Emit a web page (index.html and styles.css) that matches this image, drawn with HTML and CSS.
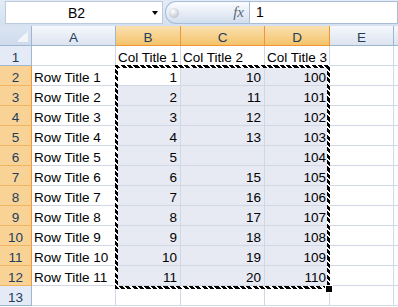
FILE: index.html
```html
<!DOCTYPE html>
<html lang="en">
<head>
    <meta charset="UTF-8">
    <title>Sheet selection</title>
    <link rel="stylesheet" href="styles.css">
</head>
<body>
    <div class="formula-bar">
        <div class="name-box">
            <span class="name">B2</span>
            <span class="drop"><span class="arrow"></span></span>
        </div>
        <div class="fx-box">
            <span class="knob"></span>
            <span class="fx">fx</span>
        </div>
        <div class="formula-input">1</div>
    </div>

    <div class="sheet">
        <div class="grid">
            <div class="c corner"></div>
            <div class="c h">A</div>
            <div class="c h hs">B</div>
            <div class="c h hs">C</div>
            <div class="c h hs">D</div>
            <div class="c h">E</div>
            <div class="c h"></div>

            <div class="c h rh">1</div>
            <div class="c"></div>
            <div class="c">Col Title 1</div>
            <div class="c">Col Title 2</div>
            <div class="c">Col Title 3</div>
            <div class="c"></div>
            <div class="c"></div>

            <div class="c h rh rs">2</div>
            <div class="c">Row Title 1</div>
            <div class="c n">1</div>
            <div class="c n s">10</div>
            <div class="c n s">100</div>
            <div class="c"></div>
            <div class="c"></div>

            <div class="c h rh rs">3</div>
            <div class="c">Row Title 2</div>
            <div class="c n s">2</div>
            <div class="c n s">11</div>
            <div class="c n s">101</div>
            <div class="c"></div>
            <div class="c"></div>

            <div class="c h rh rs">4</div>
            <div class="c">Row Title 3</div>
            <div class="c n s">3</div>
            <div class="c n s">12</div>
            <div class="c n s">102</div>
            <div class="c"></div>
            <div class="c"></div>

            <div class="c h rh rs">5</div>
            <div class="c">Row Title 4</div>
            <div class="c n s">4</div>
            <div class="c n s">13</div>
            <div class="c n s">103</div>
            <div class="c"></div>
            <div class="c"></div>

            <div class="c h rh rs">6</div>
            <div class="c">Row Title 5</div>
            <div class="c n s">5</div>
            <div class="c n s"></div>
            <div class="c n s">104</div>
            <div class="c"></div>
            <div class="c"></div>

            <div class="c h rh rs">7</div>
            <div class="c">Row Title 6</div>
            <div class="c n s">6</div>
            <div class="c n s">15</div>
            <div class="c n s">105</div>
            <div class="c"></div>
            <div class="c"></div>

            <div class="c h rh rs">8</div>
            <div class="c">Row Title 7</div>
            <div class="c n s">7</div>
            <div class="c n s">16</div>
            <div class="c n s">106</div>
            <div class="c"></div>
            <div class="c"></div>

            <div class="c h rh rs">9</div>
            <div class="c">Row Title 8</div>
            <div class="c n s">8</div>
            <div class="c n s">17</div>
            <div class="c n s">107</div>
            <div class="c"></div>
            <div class="c"></div>

            <div class="c h rh rs">10</div>
            <div class="c">Row Title 9</div>
            <div class="c n s">9</div>
            <div class="c n s">18</div>
            <div class="c n s">108</div>
            <div class="c"></div>
            <div class="c"></div>

            <div class="c h rh rs">11</div>
            <div class="c">Row Title 10</div>
            <div class="c n s">10</div>
            <div class="c n s">19</div>
            <div class="c n s">109</div>
            <div class="c"></div>
            <div class="c"></div>

            <div class="c h rh rs">12</div>
            <div class="c">Row Title 11</div>
            <div class="c n s">11</div>
            <div class="c n s">20</div>
            <div class="c n s">110</div>
            <div class="c"></div>
            <div class="c"></div>

            <div class="c h rh">13</div>
            <div class="c"></div>
            <div class="c"></div>
            <div class="c"></div>
            <div class="c"></div>
            <div class="c"></div>
            <div class="c"></div>
        </div>
        <!-- copy selection around B2:D12 -->
        <div class="ants"></div>
        <div class="handle"></div>
    </div>
</body>
</html>
```

FILE: styles.css
```css
body {
    margin: 0;
    font-family: "Liberation Sans", Arial, sans-serif;
    font-size: 13.5px;
    color: #000;
    background-color: #fff;
    overflow: hidden;
}

/* formula bar */
.formula-bar {
    display: flex;
    height: 26px;
    box-sizing: border-box;
    padding: 1px 0 2px 5px;
    background: linear-gradient(#e3ebf6, #d5e1f0);
}
.name-box {
    display: flex;
    align-items: center;
    width: 158px;
    box-sizing: border-box;
    background-color: #fff;
    border: 1px solid #bccbe0;
}
.name {
    flex: 1;
    text-align: center;
    font-size: 14px;
}
.drop {
    display: flex;
    justify-content: center;
    width: 15px;
}
.arrow {
    width: 0;
    height: 0;
    border-left: 3.5px solid transparent;
    border-right: 3.5px solid transparent;
    border-top: 4px solid #000;
}
.fx-box {
    display: flex;
    align-items: center;
    width: 84px;
    margin-left: 2px;
    box-sizing: border-box;
    border: 1px solid #a9bdd8;
    border-right: none;
    border-radius: 11px 0 0 11px;
    background: linear-gradient(#fbfcfe, #e9eff8 45%, #d3dfee);
}
.knob {
    width: 10px;
    height: 10px;
    margin-left: 3px;
    border-radius: 50%;
    background: radial-gradient(circle at 40% 35%, #ffffff, #c3c9d2 70%, #a7afbb);
}
.fx {
    margin-left: auto;
    margin-right: 5px;
    font-family: "Liberation Serif", serif;
    font-style: italic;
    font-size: 15px;
    color: #5b6779;
}
.formula-input {
    flex: 1;
    box-sizing: border-box;
    background-color: #fff;
    border: 1px solid #a9bdd8;
    padding-left: 6px;
    line-height: 20px;
    font-size: 14px;
}

/* sheet */
.sheet {
    position: relative;
}
.grid {
    display: grid;
    grid-template-columns: 32px 84px 65px 84px 65px 64px 1fr;
    grid-auto-rows: 20px;
}
.c {
    box-sizing: border-box;
    border-right: 1px solid #d0d7e5;
    border-bottom: 1px solid #d0d7e5;
    padding: 4px 2px 0;
    line-height: 15px;
    white-space: nowrap;
}
.n {
    text-align: right;
    padding-right: 3px;
}
.s {
    background-color: #e7e9f3;
}
.h {
    text-align: center;
    color: #233d5c;
    border-right-color: #9eb6ce;
    border-bottom-color: #9eb6ce;
    background: linear-gradient(#f6f8fc, #e6ecf5 60%, #dce4f0);
}
.hs {
    border-right-color: #f29536;
    border-bottom-color: #f29536;
    background: linear-gradient(#fae0b0, #f8d28f 50%, #f3c36a);
}
.rh {
    background: #e4ebf6;
}
.rs {
    border-right-color: #f29536;
    border-bottom-color: #f0b562;
    background: #f9d396;
}
.corner {
    border-right-color: #9eb6ce;
    border-bottom-color: #9eb6ce;
    background: linear-gradient(to bottom right, transparent 50%, #f1f5fa 50%) no-repeat right 3px bottom 3px / 11px 11px,
                linear-gradient(#dbe5f2, #cfdbec);
}

.ants {
    position: absolute;
    left: 115px;
    top: 39px;
    width: 215px;
    height: 224px;
    box-sizing: border-box;
    border: 3px solid transparent;
    border-image: repeating-linear-gradient(45deg, #000 0 3px, #fff 3px 4.5px) 3;
}
.handle {
    position: absolute;
    left: 325px;
    top: 259px;
    width: 6px;
    height: 6px;
    background-color: #000;
    border: 1px solid #fff;
}
```
